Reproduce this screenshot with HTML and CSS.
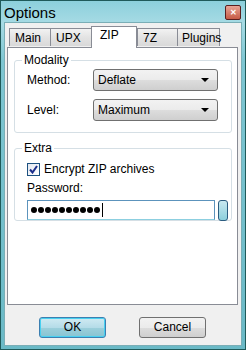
FILE: index.html
```html
<!DOCTYPE html>
<html lang="en">
<head>
    <meta charset="UTF-8">
    <title>Options</title>
    <link rel="stylesheet" href="styles.css">
</head>
<body>

    <div class="window">

        <div class="titlebar">
            <span class="title">Options</span>
            <div class="close-btn">&#x2715;</div>
        </div>

        <div class="client">

            <div class="tabs">
                <div class="tab tab-main">Main</div>
                <div class="tab tab-upx">UPX</div>
                <div class="tab active">ZIP</div>
                <div class="tab tab-7z">7Z</div>
                <div class="tab tab-plugins">Plugins</div>
            </div>

            <div class="panel">

                <fieldset class="group group-modality">
                    <legend>Modality</legend>
                    <div class="row">
                        <span class="label">Method:</span>
                        <div class="combo">Deflate<span class="arrow"></span></div>
                    </div>
                    <div class="row">
                        <span class="label">Level:</span>
                        <div class="combo">Maximum<span class="arrow"></span></div>
                    </div>
                </fieldset>

                <fieldset class="group group-extra">
                    <legend>Extra</legend>
                    <div class="check-row">
                        <span class="checkbox">
                            <svg width="9" height="9" viewBox="0 0 9 9"><path d="M1 4.5 L3.5 7.5 L8 1" fill="none" stroke="#1c2e8a" stroke-width="2"/></svg>
                        </span>
                        <span>Encrypt ZIP archives</span>
                    </div>
                    <div class="pwd-label">Password:</div>
                    <div class="pwd-row">
                        <div class="pwd-field">
                            <span class="dot"></span><span class="dot"></span><span class="dot"></span><span class="dot"></span><span class="dot"></span>
                            <span class="dot"></span><span class="dot"></span><span class="dot"></span><span class="dot"></span><span class="dot"></span>
                            <span class="caret"></span>
                        </div>
                        <div class="pwd-btn"></div>
                    </div>
                </fieldset>

            </div>

            <div class="buttons">
                <div class="btn btn-default">OK</div>
                <div class="btn">Cancel</div>
            </div>

        </div>

    </div>

</body>
</html>
```

FILE: styles.css
```css
body{
    margin: 0;
    background-color: #ffffff;
    font-family: "Liberation Sans", Arial, sans-serif;
    font-size: 12px;
    color: #000;
}

.window{
    width: 244px;
    height: 348px;
    border: 1px solid #1f5a5a;
    background: linear-gradient(to bottom, #8cd0dc 0px, #a6dbe4 22px, #7ec6d2 60px, #6ab9c6 350px);
    display: flex;
    flex-direction: column;
}

.titlebar{
    height: 21px;
    display: flex;
    align-items: center;
    justify-content: space-between;
    padding: 0 4px 0 3px;
}

.title{
    font-size: 15px;
    color: #000;
    margin-top: 2px;
}

.close-btn{
    width: 14px;
    height: 13px;
    border: 1px solid #5a1f1f;
    border-radius: 2px;
    background: linear-gradient(to bottom, #e8a596, #c65a45);
    color: #fff;
    font-size: 8px;
    font-weight: bold;
    line-height: 13px;
    text-align: center;
    margin-top: 1px;
}

.client{
    flex: 1;
    margin: 0 3px 3px 3px;
    background-color: #f0f0f0;
    border: 1px solid #7aaeb6;
    display: flex;
    flex-direction: column;
    padding: 3px 3px 0 2px;
}

.tabs{
    display: flex;
    align-items: flex-end;
    height: 21px;
    padding-left: 2px;
    position: relative;
    z-index: 1;
}

.tab{
    height: 18px;
    box-sizing: border-box;
    border: 1px solid #898c95;
    border-bottom: none;
    border-right: none;
    background: linear-gradient(to bottom, #f2f2f2, #e3e3e3 50%, #d9d9d9);
    font-size: 12px;
    line-height: 18px;
    padding-left: 5px;
    margin-bottom: 1px;
    flex-shrink: 0;
}

.tab-main{
    width: 41px;
}

.tab-upx{
    width: 41px;
}

.tab-7z{
    width: 40px;
    border-right: none;
}

.tab-plugins{
    width: 43px;
    border-right: 1px solid #898c95;
    padding-left: 4px;
}

.active{
    height: 22px;
    width: 46px;
    background: #fff;
    border-right: 1px solid #898c95;
    margin-bottom: -1px;
    line-height: 16px;
    padding-left: 8px;
}

.panel{
    height: 258px;
    box-sizing: border-box;
    background: #fff;
    border: 1px solid #898c95;
    padding: 5px 5px 0 6px;
}

.group{
    margin: 0;
    border: 1px solid #d5dfe5;
    border-radius: 3px;
    padding: 0 0 0 12px;
}

.group legend{
    font-size: 12px;
    padding: 0 2px;
    margin-left: -5px;
}

.group-modality{
    height: 80px;
    box-sizing: border-box;
}

.group-extra{
    margin-top: 8px;
    height: 80px;
    box-sizing: border-box;
}

.row{
    display: flex;
    align-items: center;
    margin-top: 2px;
    margin-bottom: 8px;
}

.label{
    width: 66px;
}

.combo{
    width: 125px;
    height: 22px;
    box-sizing: border-box;
    border: 1px solid #707070;
    border-radius: 3px;
    background: linear-gradient(to bottom, #f2f2f2, #ebebeb 50%, #dddddd 51%, #cfcfcf);
    line-height: 20px;
    padding-left: 4px;
    position: relative;
}

.arrow{
    position: absolute;
    right: 8px;
    top: 8px;
    border-left: 4px solid transparent;
    border-right: 4px solid transparent;
    border-top: 4px solid #000;
}

.check-row{
    display: flex;
    align-items: center;
    margin-top: 7px;
}

.checkbox{
    width: 11px;
    height: 11px;
    border: 1px solid #1c5180;
    background: linear-gradient(to bottom right, #e4e8f0, #ffffff);
    margin-right: 4px;
    display: flex;
    align-items: center;
    justify-content: center;
}

.pwd-label{
    margin-top: 5px;
}

.pwd-row{
    display: flex;
    margin-top: 5px;
}

.pwd-field{
    width: 188px;
    height: 20px;
    box-sizing: border-box;
    border: 1px solid #5c93bc;
    border-bottom-color: #8ccfe0;
    padding-left: 3px;
    display: flex;
    align-items: center;
    gap: 1px;
}

.dot{
    width: 6px;
    height: 6px;
    border-radius: 50%;
    background: #000;
}

.caret{
    width: 1px;
    height: 14px;
    background: #000;
    margin-left: 1px;
}

.pwd-btn{
    width: 8px;
    height: 19px;
    margin-left: 3px;
    border: 1px solid #2b5c80;
    border-radius: 3px;
    background: linear-gradient(to bottom, #c8e8f0, #8ccfdc);
}

.buttons{
    display: flex;
    justify-content: center;
    gap: 33px;
    margin-top: 12px;
}

.btn{
    width: 67px;
    height: 21px;
    box-sizing: border-box;
    border: 1px solid #707070;
    border-radius: 3px;
    background: linear-gradient(to bottom, #f2f2f2, #ebebeb 50%, #dddddd 51%, #cfcfcf);
    text-align: center;
    line-height: 19px;
}

.btn-default{
    border-color: #3c7fb1;
    background: linear-gradient(to bottom, #d0eaf2, #b5dce8 50%, #9ccfdb 51%, #88c4d2);
    box-shadow: inset 0 0 0 1px #48d0f0;
}
```
